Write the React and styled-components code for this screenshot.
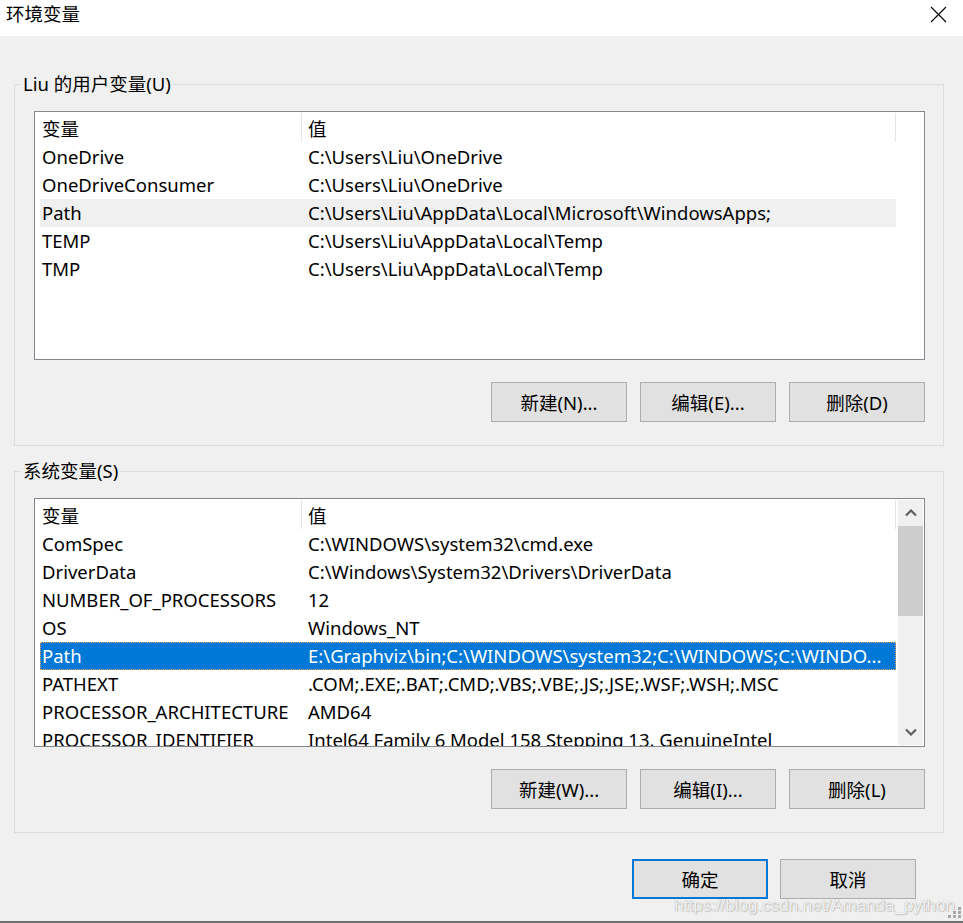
import React from 'react'
import styled, { createGlobalStyle } from 'styled-components'

const GlobalStyle = createGlobalStyle`
  html, body {
    margin: 0;
    padding: 0;
    background: #f0f0f0;
  }
  body {
    font-family: "Noto Sans", "Noto Sans CJK SC", sans-serif;
    font-size: 18.5px;
    color: #000;
  }
  * { box-sizing: border-box; }
`

const userVars = [
  ['OneDrive', 'C:\\Users\\Liu\\OneDrive'],
  ['OneDriveConsumer', 'C:\\Users\\Liu\\OneDrive'],
  ['Path', 'C:\\Users\\Liu\\AppData\\Local\\Microsoft\\WindowsApps;'],
  ['TEMP', 'C:\\Users\\Liu\\AppData\\Local\\Temp'],
  ['TMP', 'C:\\Users\\Liu\\AppData\\Local\\Temp'],
]

const systemVars = [
  ['ComSpec', 'C:\\WINDOWS\\system32\\cmd.exe'],
  ['DriverData', 'C:\\Windows\\System32\\Drivers\\DriverData'],
  ['NUMBER_OF_PROCESSORS', '12'],
  ['OS', 'Windows_NT'],
  ['Path', 'E:\\Graphviz\\bin;C:\\WINDOWS\\system32;C:\\WINDOWS;C:\\WINDO...'],
  ['PATHEXT', '.COM;.EXE;.BAT;.CMD;.VBS;.VBE;.JS;.JSE;.WSF;.WSH;.MSC'],
  ['PROCESSOR_ARCHITECTURE', 'AMD64'],
  ['PROCESSOR_IDENTIFIER', 'Intel64 Family 6 Model 158 Stepping 13, GenuineIntel'],
]

const CloseIcon = () =>
  <svg width="17" height="17" viewBox="0 0 17 17">
    <path d="M1 1 L16 16 M16 1 L1 16" stroke="#000" strokeWidth="1.1" fill="none" />
  </svg>

const Chevron = ({ down }) =>
  <svg width="12" height="8" viewBox="0 0 12 8">
    <path
      d={down ? 'M1 1.5 L6 6.5 L11 1.5' : 'M1 6.5 L6 1.5 L11 6.5'}
      stroke="#606060" strokeWidth="2.2" fill="none"
    />
  </svg>

const Grip = () =>
  <svg width="14" height="11" viewBox="0 0 14 11">
    <rect x="10" y="0" width="3" height="3" fill="#a8a8a8" />
    <rect x="5" y="4" width="3" height="3" fill="#a8a8a8" />
    <rect x="10" y="4" width="3" height="3" fill="#a8a8a8" />
    <rect x="0" y="8" width="3" height="3" fill="#a8a8a8" />
    <rect x="5" y="8" width="3" height="3" fill="#a8a8a8" />
    <rect x="10" y="8" width="3" height="3" fill="#a8a8a8" />
  </svg>


function VarList({ rows, selected, hot, scroll }) {
  return (
    <ListView>
      <ListContent>
        <Header>
          <HeaderCell width={262} pad={2}>变量</HeaderCell>
          <HeaderCell width={594} pad={6}>值</HeaderCell>
        </Header>
        {rows.map(([name, value], i) =>
          <Row key={name} selected={i === selected} hot={i === hot}>
            <Cell width={262} pad={2}>{name}</Cell>
            <Cell width={594} pad={6}>{value}</Cell>
          </Row>
        )}
      </ListContent>
      {scroll &&
        <ScrollBar>
          <ScrollBtn><Chevron /></ScrollBtn>
          <Thumb />
          <Track />
          <ScrollBtn><Chevron down /></ScrollBtn>
        </ScrollBar>
      }
    </ListView>
  )
}

function VarGroup({ title, rows, keys, selected, hot, scroll, first }) {
  return (
    <GroupBox first={first}>
      <Legend>{title}</Legend>
      <VarList rows={rows} selected={selected} hot={hot} scroll={scroll} />
      <ButtonRow>
        <Button>新建({keys[0]})...</Button>
        <Button>编辑({keys[1]})...</Button>
        <Button>删除({keys[2]})</Button>
      </ButtonRow>
    </GroupBox>
  )
}

export default function App() {
  return (
    <Window>
      <GlobalStyle />
      <TitleBar>
        <Title>环境变量</Title>
        <CloseBtn><CloseIcon /></CloseBtn>
      </TitleBar>

      <Body>
        <VarGroup
          first
          title="Liu 的用户变量(U)"
          rows={userVars}
          keys={['N', 'E', 'D']}
          hot={2}
        />
        <VarGroup
          title="系统变量(S)"
          rows={systemVars}
          keys={['W', 'I', 'L']}
          selected={4}
          scroll
        />
        <Footer>
          <Button primary>确定</Button>
          <Button>取消</Button>
        </Footer>
      </Body>

      <Watermark>https://blog.csdn.net/Amanda_python</Watermark>
      <GripBox><Grip /></GripBox>
    </Window>
  )
}

const Window = styled.div`
  position: relative;
  width: 963px;
  height: 923px;
  background: #f0f0f0;
  overflow: hidden;
  border-bottom: 2px solid #6e6e6e;
`

const TitleBar = styled.div`
  height: 36px;
  background: #fff;
  display: flex;
  align-items: flex-start;
  justify-content: space-between;
  padding-left: 6px;
`

const Title = styled.div`
  line-height: 28px;
`

const CloseBtn = styled.div`
  width: 46px;
  height: 28px;
  margin-right: 2px;
  display: flex;
  align-items: center;
  justify-content: center;
`

const Body = styled.div`
  padding: 48px 19px 0 14px;
`

const GroupBox = styled.div`
  position: relative;
  border: 1px solid #dcdcdc;
  padding: 26px 18px 23px 19px;
  margin-top: ${props => props.first ? 0 : 25}px;
`

const Legend = styled.div`
  position: absolute;
  top: -13px;
  left: 6px;
  padding: 0 2px;
  line-height: 24px;
  background: #f0f0f0;
`

const ListView = styled.div`
  height: 249px;
  border: 1px solid #828790;
  background: #fff;
  display: flex;
  overflow: hidden;
`

const ListContent = styled.div`
  flex: 1;
  min-width: 0;
  overflow: hidden;
`

const Header = styled.div`
  display: flex;
  height: 31px;
  padding: 1px 0 1px 5px;
`

const HeaderCell = styled.div`
  width: ${props => props.width}px;
  padding-left: ${props => props.pad}px;
  border-right: 1px solid #e5e5e5;
  display: flex;
  align-items: center;
  white-space: nowrap;
`

const Row = styled.div`
  display: flex;
  width: 856px;
  height: 28px;
  margin-left: 5px;
  line-height: 28px;
  white-space: nowrap;
  background: ${props => props.selected ? '#0078d7' : props.hot ? '#f0f0f0' : 'transparent'};
  color: ${props => props.selected ? '#fff' : '#000'};
  ${props => props.selected && `
    outline: 1px dotted #e7a663;
    outline-offset: -1px;
  `}
`

const Cell = styled.div`
  width: ${props => props.width}px;
  padding-left: ${props => props.pad}px;
  overflow: hidden;
  text-overflow: ellipsis;
`

const ScrollBar = styled.div`
  width: 25px;
  margin: 1px 1px 1px 0;
  background: #f0f0f0;
  display: flex;
  flex-direction: column;
`

const ScrollBtn = styled.div`
  height: 26px;
  display: flex;
  align-items: center;
  justify-content: center;
`

const Thumb = styled.div`
  height: 90px;
  background: #cdcdcd;
`

const Track = styled.div`
  flex: 1;
`

const ButtonRow = styled.div`
  display: flex;
  justify-content: flex-end;
  gap: 13px;
  margin-top: 22px;
`

const Button = styled.div`
  width: 136px;
  height: 40px;
  background: #e1e1e1;
  border: ${props => props.primary ? '2px solid #0078d7' : '1px solid #adadad'};
  display: flex;
  align-items: center;
  justify-content: center;
  white-space: nowrap;
`

const Footer = styled.div`
  display: flex;
  justify-content: flex-end;
  gap: 12px;
  margin-top: 26px;
  padding-right: 28px;
`

const Watermark = styled.div`
  position: absolute;
  right: 8px;
  bottom: 5px;
  font-family: "Liberation Sans", Arial, sans-serif;
  font-size: 17px;
  color: rgba(255, 255, 255, 0.9);
  text-shadow: 0 0 1px rgba(0, 0, 0, 0.35), 1px 1px 1px rgba(0, 0, 0, 0.15);
`

const GripBox = styled.div`
  position: absolute;
  right: 1px;
  bottom: 3px;
  display: flex;
`
